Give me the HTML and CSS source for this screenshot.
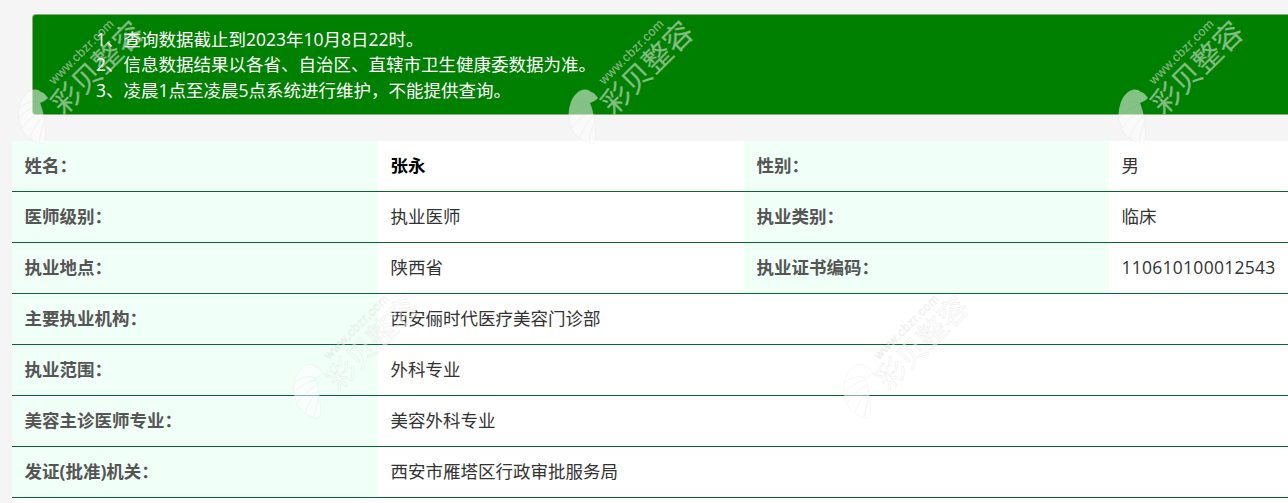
FILE: index.html
```html
<!DOCTYPE html>
<html lang="zh-CN">
<head>
<meta charset="utf-8">
<title>医师执业信息查询结果</title>
<link rel="stylesheet" href="styles.css">
</head>
<body>
<svg class="defs" width="0" height="0" aria-hidden="true">
  <defs>
    <symbol id="wm" viewBox="0 0 140 140">
      <path class="wm-shell" d="M38 88 C35 84 33 82 31 82 C27 78 21 79 17 83 C12 87 10 94 9 100 C8 106 9 112 11 116 C12 121 16 126 21 129 C26 132 30 134 33 133 C36 131 36 124 35 118 C35 110 33 100 30 93 C33 92 36 90 38 88 Z"/>
      <path class="wm-ribs" d="M30 93 C24 90 16 92 10 98 M31 95 C24 96 15 101 9 108 M32 100 C26 104 18 109 12 118 M33 106 C28 111 23 118 20 128 M34 112 C32 118 30 125 29 132"/>
      <text class="wm-url" transform="translate(44 75) rotate(-45)">www.cbzr.com</text>
      <text class="wm-name" transform="translate(53.5 106) rotate(-45)">彩贝整容</text>
    </symbol>
  </defs>
</svg>

<main class="page">
  <section class="notice">
    <p>1、查询数据截止到2023年10月8日22时。</p>
    <p>2、信息数据结果以各省、自治区、直辖市卫生健康委数据为准。</p>
    <p>3、凌晨1点至凌晨5点系统进行维护，不能提供查询。</p>
  </section>

  <section class="info">
    <div class="cell label">姓名：</div>
    <div class="cell value strong">张永</div>
    <div class="cell label">性别：</div>
    <div class="cell value">男</div>

    <div class="cell label">医师级别：</div>
    <div class="cell value">执业医师</div>
    <div class="cell label">执业类别：</div>
    <div class="cell value">临床</div>

    <div class="cell label">执业地点：</div>
    <div class="cell value">陕西省</div>
    <div class="cell label">执业证书编码：</div>
    <div class="cell value code">110610100012543</div>

    <div class="cell label">主要执业机构：</div>
    <div class="cell value wide">西安俪时代医疗美容门诊部</div>

    <div class="cell label">执业范围：</div>
    <div class="cell value wide">外科专业</div>

    <div class="cell label">美容主诊医师专业：</div>
    <div class="cell value wide">美容外科专业</div>

    <div class="cell label">发证(批准)机关：</div>
    <div class="cell value wide">西安市雁塔区行政审批服务局</div>
  </section>
</main>

<div class="marks" aria-hidden="true">
  <svg class="mark m1"><use href="#wm"/></svg>
  <svg class="mark m2"><use href="#wm"/></svg>
  <svg class="mark m3"><use href="#wm"/></svg>
  <svg class="mark m4"><use href="#wm"/></svg>
  <svg class="mark m5"><use href="#wm"/></svg>
</div>
</body>
</html>
```

FILE: styles.css
```css
* { box-sizing: border-box; }

html, body {
  margin: 0;
  height: 100%;
  overflow: hidden;
}

body {
  background: #f5f5f5;
  font-family: "Open Sans", "Noto Sans CJK SC", sans-serif;
  font-size: 17.5px;
  color: #333;
}

.defs { position: absolute; }

.page {
  display: flex;
  flex-direction: column;
  height: 100%;
  padding: 14px 0 0 12px;
}

.notice {
  margin: 0 -12px 26px 20px;
  padding: 11.5px 0 11px 63px;
  border: 1px solid rgba(235, 204, 209, 0.6);
  border-radius: 4px;
  background: #008000;
  color: #fff;
  line-height: 25.5px;
}

.notice p { margin: 0; }

.info {
  flex: 1;
  display: grid;
  grid-template-columns: 366px 366px 365px 1fr;
  grid-auto-rows: 51px;
  background: #fff;
}

.cell {
  display: flex;
  align-items: center;
  padding: 0 0 2px 12.5px;
  border-bottom: 1px solid #0a6437;
  line-height: 25px;
}

.label {
  background: #f0fff8;
  color: #555;
  font-weight: 700;
}

.value { color: #333; }
.strong { color: #000; font-weight: 700; }
.code { letter-spacing: 0.26px; }
.wide { grid-column: 2 / 5; }

.marks {
  position: absolute;
  inset: 0;
  overflow: hidden;
  pointer-events: none;
}

.mark {
  position: absolute;
  width: 140px;
  height: 140px;
}

.m1 { left: 10px; top: 10px; }
.m2 { left: 560px; top: 10px; }
.m3 { left: 1110px; top: 10px; }
.m4 { left: 285px; top: 285px; }
.m5 { left: 835px; top: 285px; }

.wm-url, .wm-name {
  fill: rgba(255, 255, 255, 0.5);
  stroke: rgba(170, 170, 170, 0.2);
  stroke-width: 0.7px;
}

.wm-url {
  font-size: 12.5px;
  font-family: "Liberation Sans", sans-serif;
  letter-spacing: 0.5px;
}

.wm-name {
  font-size: 29px;
  font-family: "Noto Sans CJK SC", sans-serif;
}

.wm-shell {
  fill: rgba(255, 255, 255, 0.52);
  stroke: rgba(170, 170, 170, 0.16);
  stroke-width: 0.6px;
}

.wm-ribs {
  fill: none;
  stroke: rgba(130, 140, 130, 0.13);
  stroke-width: 0.7px;
}
```
